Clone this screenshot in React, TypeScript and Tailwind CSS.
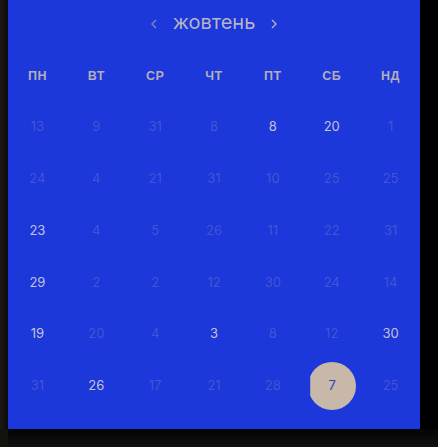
import React from "react";

type Cell = { n: number; b?: boolean; sel?: boolean };

const rows: Cell[][] = [
  [{ n: 13 }, { n: 9 }, { n: 31 }, { n: 8 }, { n: 8, b: true }, { n: 20, b: true }, { n: 1 }],
  [{ n: 24 }, { n: 4 }, { n: 21 }, { n: 31 }, { n: 10 }, { n: 25 }, { n: 25 }],
  [{ n: 23, b: true }, { n: 4 }, { n: 5 }, { n: 26 }, { n: 11 }, { n: 22 }, { n: 31 }],
  [{ n: 29, b: true }, { n: 2 }, { n: 2 }, { n: 12 }, { n: 30 }, { n: 24 }, { n: 14 }],
  [{ n: 19, b: true }, { n: 20 }, { n: 4 }, { n: 3, b: true }, { n: 8 }, { n: 12 }, { n: 30, b: true }],
  [{ n: 31 }, { n: 26, b: true }, { n: 17 }, { n: 21 }, { n: 28 }, { n: 7, sel: true }, { n: 25 }],
];

const days = ["ПН", "ВТ", "СР", "ЧТ", "ПТ", "СБ", "НД"];

export default function App() {
  return (
    <div
      className="w-[438px] h-[447px] bg-black flex flex-col overflow-hidden"
      style={{ fontFamily: "Inter, 'Noto Sans', sans-serif" }}
    >
      <div className="flex h-[429px]">
        <div className="w-[8px] h-full bg-gradient-to-r from-[#1c1915] to-[#0d0c0a]" />
        <div className="w-[412px] h-full bg-[#1c37da] flex flex-col">
          <div className="h-[44px] pt-[2px] flex items-center justify-center gap-[14px]">
            <svg width="10" height="12" viewBox="0 0 10 12" className="text-[#7f86c8] mt-[1px]">
              <path d="M7 2 L3 6 L7 10" fill="none" stroke="currentColor" strokeWidth="1.4" />
            </svg>
            <span className="text-[20px] leading-none text-[#b7b4c4] font-normal pb-[2px]">жовтень</span>
            <svg width="10" height="12" viewBox="0 0 10 12" className="text-[#b7b4c4] mt-[1px]">
              <path d="M3 2 L7 6 L3 10" fill="none" stroke="currentColor" strokeWidth="1.4" />
            </svg>
          </div>
          <div className="h-[7px]" />
          <div className="grid grid-cols-7 h-[50px] items-center">
            {days.map((d) => (
              <div
                key={d}
                className="text-center text-[12.5px] font-bold text-[#b3aebb] tracking-[0.5px]"
                style={{ fontFamily: "'Liberation Sans', Arial, sans-serif" }}
              >
                {d}
              </div>
            ))}
          </div>
          {rows.map((r, i) => (
            <div key={i} className="grid grid-cols-7 h-[51.8px] items-center">
              {r.map((c, j) => (
                <div key={j} className="flex items-center justify-center h-full">
                  {c.sel ? (
                    <div className="w-[48px] h-[48px] rounded-full bg-[#c8b8a9] flex items-center justify-center text-[13px] text-[#3540bb] [clip-path:inset(0_0_0_2px)] ml-[1px]">
                      {c.n}
                    </div>
                  ) : (
                    <span
                      className={
                        "text-[13px] " + (c.b ? "text-[#c4c2d8]" : "text-[#4255d5]")
                      }
                    >
                      {c.n}
                    </span>
                  )}
                </div>
              ))}
            </div>
          ))}
        </div>
        <div className="flex-1 bg-black" />
      </div>
      <div className="flex-1 bg-gradient-to-b from-[#050505] to-[#101010] flex">
        <div className="w-[8px] bg-[#14120f]" />
        <div className="flex-1" />
      </div>
    </div>
  );
}
